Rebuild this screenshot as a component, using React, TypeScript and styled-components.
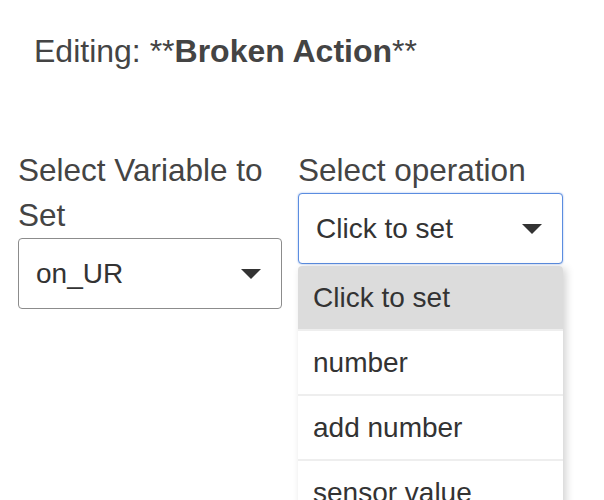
import React from 'react';
import styled, { createGlobalStyle } from 'styled-components';

const GlobalStyle = createGlobalStyle`
  body {
    margin: 0;
    background: #ffffff;
    font-family: "Liberation Sans", Arial, sans-serif;
    color: #444444;
  }
`;

const Page = styled.div`
  width: 604px;
  height: 500px;
  overflow: hidden;
  padding-left: 18px;
  box-sizing: border-box;
`;

const Title = styled.h1`
  margin: 33px 0 0 16px;
  font-size: 32px;
  line-height: 37px;
  font-weight: 400;
  color: #444444;

  b {
    font-weight: 700;
  }
`;

const Columns = styled.div`
  display: grid;
  grid-template-columns: 264px 265px;
  column-gap: 16px;
  margin-top: 78px;
  align-items: start;
`;

const Field = styled.div`
  display: flex;
  flex-direction: column;
  position: relative;
`;

const Label = styled.label`
  font-size: 31.5px;
  line-height: 45px;
  color: #444444;
`;

const SelectBox = styled.div<{ $focused?: boolean }>`
  height: 71px;
  box-sizing: border-box;
  display: flex;
  align-items: center;
  justify-content: space-between;
  padding: 0 20px 0 17px;
  border: 1px solid ${(p) => (p.$focused ? '#5b8de0' : '#8c8c8c')};
  border-radius: 4px;
  box-shadow: ${(p) => (p.$focused ? '0 0 2px rgba(80, 130, 220, 0.6)' : 'none')};
  background: #ffffff;
  font-size: 28px;
  color: #333333;
`;

const Caret = styled.span`
  width: 0;
  height: 0;
  border-left: 10px solid transparent;
  border-right: 10px solid transparent;
  border-top: 10px solid #333333;
`;

const Menu = styled.ul`
  position: absolute;
  top: 118px;
  left: 0;
  width: 265px;
  margin: 0;
  padding: 0;
  list-style: none;
  background: #ffffff;
  box-shadow: 3px 2px 8px rgba(0, 0, 0, 0.18);
  border-radius: 4px 4px 0 0;
  overflow: hidden;
`;

const MenuItem = styled.li<{ $active?: boolean }>`
  height: 65px;
  box-sizing: border-box;
  display: flex;
  align-items: center;
  padding-left: 15px;
  font-size: 28px;
  color: #333333;
  background: ${(p) => (p.$active ? '#dcdcdc' : '#ffffff')};
  border-bottom: 2px solid #eeeeee;
`;

const operations = ['Click to set', 'number', 'add number', 'sensor value'];

export default function App() {
  return (
    <>
      <GlobalStyle />
      <Page>
        <Title>
          Editing: **<b>Broken Action</b>**
        </Title>
        <Columns>
          <Field>
            <Label>Select Variable to Set</Label>
            <SelectBox>
              <span>on_UR</span>
              <Caret />
            </SelectBox>
          </Field>
          <Field>
            <Label>Select operation</Label>
            <SelectBox $focused>
              <span>Click to set</span>
              <Caret />
            </SelectBox>
            <Menu>
              {operations.map((op, i) => (
                <MenuItem key={op} $active={i === 0}>
                  {op}
                </MenuItem>
              ))}
            </Menu>
          </Field>
        </Columns>
      </Page>
    </>
  );
}
